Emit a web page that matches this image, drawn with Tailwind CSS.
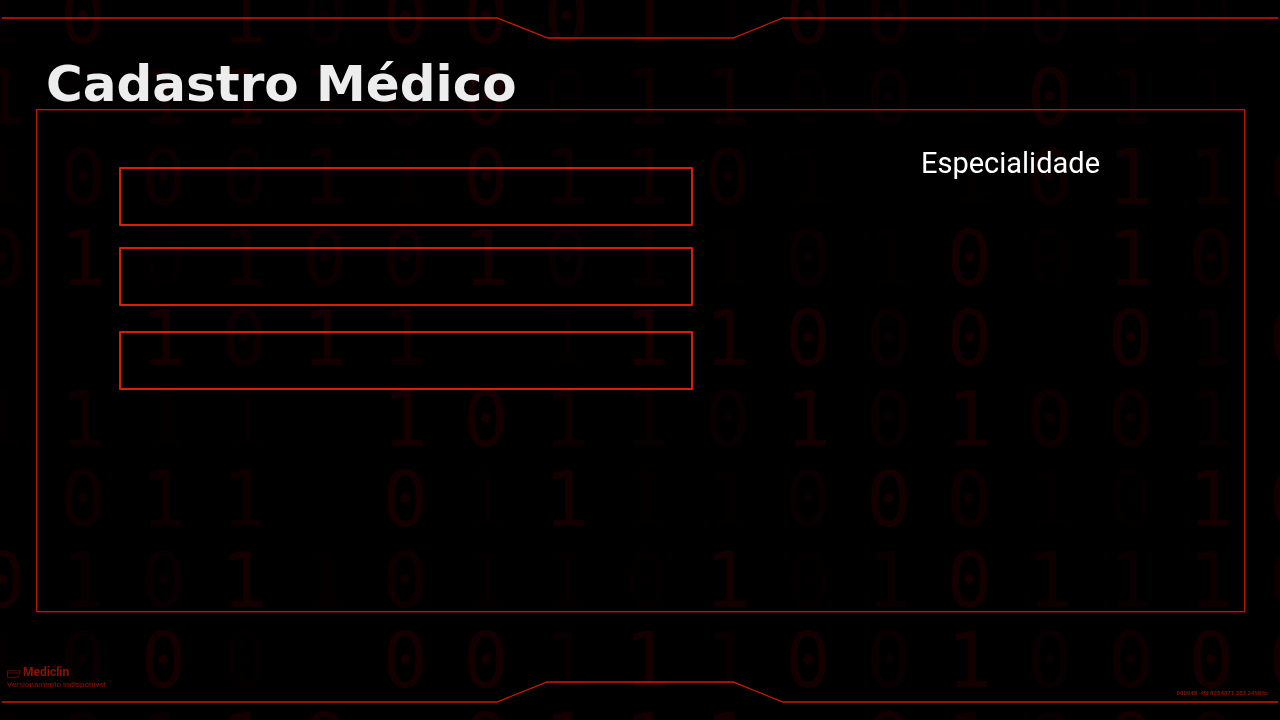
<!DOCTYPE html>
<html lang="pt-BR">
<head>
<meta charset="utf-8">
<meta name="viewport" content="width=device-width, initial-scale=1">
<title>Mediclin - Cadastro Médico</title>
<script src="https://cdn.jsdelivr.net/npm/@tailwindcss/browser@4"></script>
</head>
<body class="bg-black font-['Roboto',sans-serif] text-white">
<div class="relative flex min-h-screen flex-col overflow-hidden">

  <div id="rain" aria-hidden="true" class="pointer-events-none absolute -top-[23px] -right-[52px] -bottom-[62px] -left-[38px] z-10 grid grid-cols-17 grid-rows-10 place-items-center font-['DejaVu_Sans_Mono',monospace] text-[76px] leading-[80px] mix-blend-screen"></div>

  <header>
    <div class="flex h-10 items-start px-[2px] pt-[17px]">
      <div class="h-[2px] flex-1 bg-[#981400]"></div>
      <svg class="h-[22px] w-[288px]" viewBox="0 0 288 22" fill="none" stroke="#cc1a00" stroke-width="1.33" aria-hidden="true"><path d="M0 1H1L52 21H237L287 1H288"/></svg>
      <div class="h-[2px] flex-1 bg-[#981400]"></div>
    </div>
    <h1 class="-mb-[3px] pt-4 px-[46px] font-['DejaVu_Sans',sans-serif] text-[50px] leading-[56px] font-bold whitespace-nowrap text-[#ededed]">Cadastro Médico</h1>
  </header>

  <main class="mr-[35px] ml-9 flex flex-1 border border-[#b81600] pt-[57px] pl-[82px] shadow-[1px_1px_0_#4a0800,inset_1px_1px_0_#4a0800]">
    <form class="flex max-w-[574px] flex-1 flex-col">
      <input type="text" aria-label="Nome" class="h-[59px] w-full rounded-[1px] border-2 border-[#dc1e00] bg-transparent px-4 text-2xl outline-none">
      <input type="text" aria-label="CRM" class="mt-[21px] h-[59px] w-full rounded-[1px] border-2 border-[#dc1e00] bg-transparent px-4 text-2xl outline-none">
      <input type="text" aria-label="Contato" class="mt-[25px] h-[59px] w-full rounded-[1px] border-2 border-[#dc1e00] bg-transparent px-4 text-2xl outline-none">
    </form>
    <section class="-mt-[22px] ml-auto w-[467px] text-center">
      <h2 class="text-[29px] leading-9">Especialidade</h2>
    </section>
  </main>

  <footer class="mt-[52px] flex items-end px-[2px] pb-[17px]">
    <div class="flex-1 border-b-2 border-[#981400]">
      <div class="pb-[11px] pl-[5px] text-[#8c1400]">
        <div class="flex items-center gap-[2px] text-[12px] leading-4 font-bold">
          <svg class="mt-1 h-2 w-[14px]" viewBox="0 0 14 8" fill="none" stroke="currentColor" stroke-width=".6" aria-hidden="true"><path d="M.5 7.2V.8H13.5L11.5 7.2ZM.5 3H13"/></svg>
          <span>Mediclin</span>
        </div>
        <p class="text-[8px] leading-[10px]">Versionamento indisponível</p>
      </div>
    </div>
    <svg class="h-[22px] w-[288px]" viewBox="0 0 288 22" fill="none" stroke="#cc1a00" stroke-width="1.33" aria-hidden="true"><path d="M0 21H1L51 1H237L287 21H288"/></svg>
    <div class="flex-1 border-b-2 border-[#981400]">
      <p class="pr-[10px] pb-1 text-right text-[6px] leading-2 font-bold text-[#851300]">000948 -ffd 8284871 353 2498lts</p>
    </div>
  </footer>
</div>

<script>
  // Each pair is a digit and its brightness; ".." leaves the cell empty.
  const rows = [
    "11 04 .. 14 02 04 04 04 14 11 04 03 01 02 01 01 ..",
    "13 01 13 14 12 02 04 01 13 13 01 02 11 04 12 11 ..",
    "11 03 03 02 13 11 04 13 13 03 11 .. 11 03 14 13 03",
    "03 14 01 13 03 03 14 02 12 11 02 11 04 01 14 03 ..",
    ".. .. 14 03 14 13 .. 11 14 14 04 02 04 .. 04 12 04",
    "11 13 11 11 .. 14 04 13 12 02 14 02 14 03 03 12 ..",
    ".. 03 13 13 .. 04 11 14 11 11 02 04 03 11 01 14 04",
    "04 12 02 14 11 03 11 11 01 14 01 12 04 13 12 13 03",
    "11 02 04 01 .. 04 04 12 14 12 04 02 14 02 03 04 04",
    "01 02 12 14 04 .. 04 14 14 14 .. 04 13 02 04 03 .."
  ];
  const shades = { 1: "text-[#040000]", 2: "text-[#090001]", 3: "text-[#0e0001]", 4: "text-[#150001]" };
  const rain = document.getElementById("rain");
  for (const row of rows) for (const cell of row.split(" ")) {
    const span = document.createElement("span");
    // "14" is a bright one, "02" a dim zero
    if (cell !== "..") { span.textContent = cell[0]; span.className = shades[cell[1]]; }
    rain.append(span);
  }
</script>
</body>
</html>
